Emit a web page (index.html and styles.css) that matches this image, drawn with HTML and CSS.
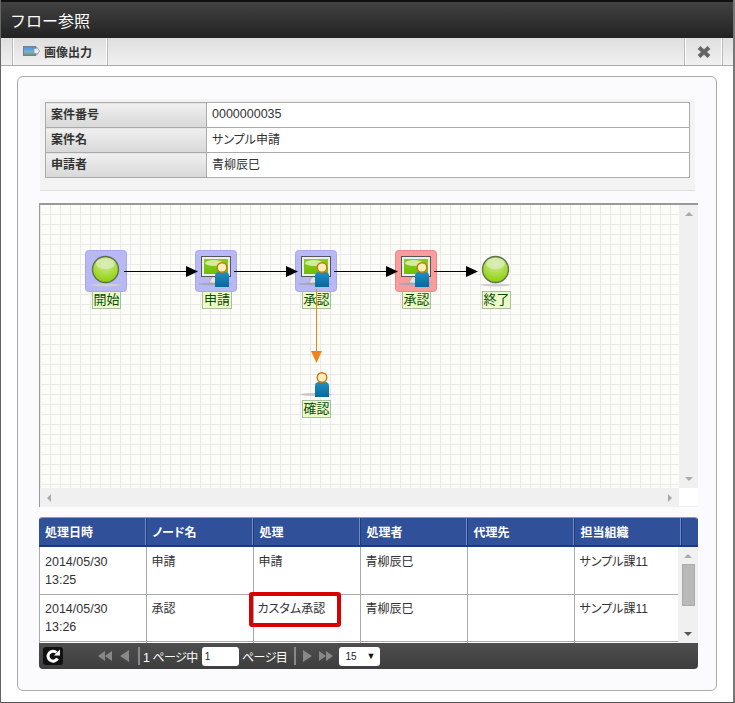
FILE: index.html
```html
<!DOCTYPE html>
<html lang="ja">
<head>
    <meta charset="UTF-8">
    <meta name="viewport" content="width=device-width, initial-scale=1.0">
    <title>フロー参照</title>
    <link rel="stylesheet" href="styles.css">
</head>
<body>
    <div class="window">
        <div class="title-bar">フロー参照</div>

        <div class="toolbar">
            <button type="button" class="tool-button">
                <svg class="export-icon" width="17" height="11" viewBox="0 0 17 11">
                    <defs>
                        <linearGradient id="exportFill" x1="0" y1="0" x2="0" y2="1">
                            <stop offset="0" stop-color="#3f8fe0"/>
                            <stop offset="0.6" stop-color="#7fb0d8"/>
                            <stop offset="1" stop-color="#5f9a50"/>
                        </linearGradient>
                    </defs>
                    <rect x="0.5" y="0.5" width="12" height="9" fill="url(#exportFill)" stroke="#77808a"/>
                    <path d="M11 2.5h2.5V0.8L16.6 5l-3.1 4.2V7.5H11z" fill="#e8eef4" stroke="#8a97a4" stroke-width="0.8"/>
                </svg>
                画像出力
            </button>
            <button type="button" class="close-button" aria-label="閉じる">
                <svg width="14" height="14" viewBox="0 0 14 14">
                    <path d="M2 2.5l10 9M12 2.5l-10 9" stroke="#666" stroke-width="4"/>
                </svg>
            </button>
        </div>

        <div class="panel">
            <div class="info-band">
                <table class="info-table">
                    <tr><th>案件番号</th><td class="num">0000000035</td></tr>
                    <tr><th>案件名</th><td>サンプル申請</td></tr>
                    <tr><th>申請者</th><td>青柳辰巳</td></tr>
                </table>
            </div>

            <div class="diagram">
                <div class="canvas">
                    <div class="node-label label-start">開始</div>
                    <div class="node-label label-apply">申請</div>
                    <div class="node-label label-approve1">承認</div>
                    <div class="node-label label-approve2">承認</div>
                    <div class="node-label label-end">終了</div>
                    <div class="node-label label-confirm">確認</div>

                    <!-- viewBox uses window coordinates -->
                    <svg class="flow" width="639" height="283" viewBox="40 205 639 283">
                        <defs>
                            <radialGradient id="ball" cx="0.5" cy="0.3" r="0.75">
                                <stop offset="0" stop-color="#cfe8a0"/>
                                <stop offset="0.55" stop-color="#a8dc40"/>
                                <stop offset="1" stop-color="#86cc00"/>
                            </radialGradient>
                            <linearGradient id="screen" x1="0" y1="0" x2="0" y2="1">
                                <stop offset="0" stop-color="#8ccc20"/>
                                <stop offset="1" stop-color="#6cc000"/>
                            </linearGradient>
                            <linearGradient id="bodyFill" x1="0" y1="0" x2="0" y2="1">
                                <stop offset="0" stop-color="#2090c0"/>
                                <stop offset="1" stop-color="#08689c"/>
                            </linearGradient>
                            <g id="person">
                                <path d="M0 20V9q0-4 4-4h6q4 0 4 4v11z" fill="url(#bodyFill)"/>
                                <circle cx="7" cy="0.5" r="4.8" fill="#fdeebc" stroke="#c87810" stroke-width="1.4"/>
                            </g>
                            <g id="task">
                                <ellipse cx="20" cy="34" rx="17" ry="1.5" fill="#a8a8b8"/>
                                <path d="M17 27h8l3 6H14z" fill="#e4e4e4" stroke="#999" stroke-width="0.6"/>
                                <rect x="6.5" y="6.5" width="29" height="20" fill="#eee" stroke="#555"/>
                                <rect x="9" y="9" width="24" height="15" fill="url(#screen)"/>
                                <ellipse cx="19" cy="13" rx="9" ry="3" fill="#d0ec9c"/>
                                <use href="#person" x="20" y="17"/>
                            </g>
                            <g id="ballIcon">
                                <ellipse cx="0" cy="15.5" rx="15" ry="1.5" fill="#cfcfcf"/>
                                <circle r="13" fill="url(#ball)" stroke="#5f6f50" stroke-width="1.3"/>
                                <ellipse cy="-6" rx="9.5" ry="5.5" fill="#e0f0c4" opacity="0.7"/>
                            </g>
                        </defs>

                        <rect class="box-blue" x="85.5" y="250.5" width="41" height="41" rx="3"/>
                        <rect class="box-blue" x="195.5" y="250.5" width="41" height="41" rx="3"/>
                        <rect class="box-blue" x="295.5" y="250.5" width="41" height="41" rx="3"/>
                        <rect class="box-red" x="395.5" y="250.5" width="41" height="41" rx="3"/>

                        <use href="#ballIcon" x="105.5" y="269.5"/>
                        <use href="#task" x="195" y="250"/>
                        <use href="#task" x="295" y="250"/>
                        <use href="#task" x="395" y="250"/>
                        <use href="#ballIcon" x="495.5" y="269.5"/>

                        <ellipse cx="316" cy="394.5" rx="16" ry="1.5" fill="#c4c4c4"/>
                        <use href="#person" x="315" y="377"/>

                        <g class="edge">
                            <path d="M124 271.5H190"/>
                            <path d="M234 271.5H290"/>
                            <path d="M334 271.5H390"/>
                            <path d="M434 271.5H470"/>
                        </g>
                        <path d="M186 266l12 5.5-12 5.5z"/>
                        <path d="M286 266l12 5.5-12 5.5z"/>
                        <path d="M386 266l12 5.5-12 5.5z"/>
                        <path d="M466 266l12 5.5-12 5.5z"/>
                        <path d="M316.5 289V353" stroke="#f08418" fill="none"/>
                        <path d="M311 351h11l-5.5 12z" fill="#f08418"/>
                    </svg>
                </div>
                <div class="scroll-v">
                    <span class="arrow-up"></span>
                    <span class="arrow-down"></span>
                </div>
                <div class="scroll-h">
                    <span class="arrow-left"></span>
                    <span class="arrow-right"></span>
                </div>
                <div class="scroll-corner"></div>
            </div>

            <div class="grid">
                <table class="grid-head">
                    <tr>
                        <th class="col">処理日時</th>
                        <th class="col">ノード名</th>
                        <th class="col">処理</th>
                        <th class="col">処理者</th>
                        <th class="col">代理先</th>
                        <th class="col">担当組織</th>
                        <th></th>
                    </tr>
                </table>
                <div class="grid-body">
                    <div class="grid-rows">
                        <table class="grid-table">
                            <tr>
                                <td class="col-first num">2014/05/30<br>13:25</td>
                                <td class="col">申請</td>
                                <td class="col">申請</td>
                                <td class="col">青柳辰巳</td>
                                <td class="col"></td>
                                <td>サンプル課11</td>
                            </tr>
                            <tr>
                                <td class="num">2014/05/30<br>13:26</td>
                                <td>承認</td>
                                <td class="custom-cell">カスタム承認<div class="highlight"></div></td>
                                <td>青柳辰巳</td>
                                <td></td>
                                <td>サンプル課11</td>
                            </tr>
                            <tr>
                                <td></td><td></td><td></td><td></td><td></td><td></td>
                            </tr>
                        </table>
                    </div>
                    <div class="grid-scroll">
                        <span class="arrow-up"></span>
                        <div class="thumb"></div>
                        <span class="arrow-down dark"></span>
                    </div>
                </div>
                <div class="pager">
                    <button type="button" class="reload" aria-label="更新">
                        <svg width="16" height="16" viewBox="0 0 16 16">
                            <path d="M12.5 10.5A5 5 0 1 1 11.5 4.5" fill="none" stroke="#fff" stroke-width="3"/>
                            <path d="M9 7.5h6V1.5z" fill="#fff"/>
                        </svg>
                    </button>
                    <svg class="pager-first" width="32" height="12" viewBox="0 0 32 12">
                        <path d="M7 1v10L0 6zM14 1v10L7 6zM31 0v12L22 6z"/>
                    </svg>
                    <span class="pager-sep"></span>
                    <span class="page-text"><span class="num">1</span> ページ中</span>
                    <input class="page-input" type="text" value="1">
                    <span class="page-text">ページ目</span>
                    <span class="pager-sep sep-right"></span>
                    <svg class="pager-last" width="30" height="12" viewBox="0 0 30 12">
                        <path d="M0 0v12l9-6zM16 1v10l7-5zM23 1v10l7-5z"/>
                    </svg>
                    <div class="page-size"><span class="num">15</span><span class="size-arrow">▼</span></div>
                </div>
            </div>
        </div>
    </div>
</body>
</html>
```

FILE: styles.css
```css
* {
    box-sizing: border-box;
}
body {
    margin: 0;
    font-family: "Liberation Sans", "Noto Sans CJK JP", sans-serif;
    font-size: 12px;
    font-feature-settings: "palt";
    color: #333;
    background: #fff;
}
.num {
    font-size: 12.5px;
}
.window {
    width: 735px;
    height: 703px;
    border-left: 1px solid #666;
    border-right: 2px solid #777;
    border-bottom: 1px solid #555;
    overflow: hidden;
}
.title-bar {
    height: 38px;
    padding: 9px 9px 0;
    border-top: 2px solid #111;
    background: linear-gradient(#424242, #222);
    color: #fff;
    font-size: 16px;
    font-feature-settings: normal;
    line-height: 22px;
}
.toolbar {
    display: flex;
    justify-content: space-between;
    height: 28px;
    padding: 0 10px 0 11px;
    border-bottom: 1px solid #aaa;
    background: linear-gradient(#dedede, #f1f1f1);
}
.tool-button,
.close-button {
    display: flex;
    align-items: center;
    padding: 0;
    border: none;
    border-left: 1px solid #bbb;
    border-right: 1px solid #bbb;
    box-shadow: inset 1px 0 #fff, inset -1px 0 #fff;
    background: transparent;
    font-family: inherit;
    color: #333;
}
.tool-button {
    width: 96px;
    padding-left: 10px;
    gap: 4px;
    font-size: 12px;
    font-weight: bold;
}
.close-button {
    width: 39px;
    justify-content: center;
}
.panel {
    width: 700px;
    height: 615px;
    margin: 10px 0 0 16px;
    padding: 22px 21px 0 22px;
    border: 1px solid #aaa;
    border-radius: 6px;
    background: #fbfbfe;
}
.info-band {
    padding: 3px 5px 12px;
    border-bottom: 1px solid #ddd;
    background: #f3f3f3;
}
.info-table {
    width: 100%;
    border-collapse: collapse;
    table-layout: fixed;
}
.info-table th,
.info-table td {
    height: 25px;
    padding: 0 5px 3px;
    border: 1px solid #aaa;
    text-align: left;
}
.info-table th {
    width: 161px;
    background: linear-gradient(#f0f0f0, #d8d8d8);
    font-weight: bold;
}
.info-table td {
    background: #fff;
}

/* flow diagram */
.diagram {
    display: grid;
    grid-template-columns: 639px 19px;
    grid-template-rows: 283px 19px;
    width: 659px;
    margin: 12px 0 0 -1px;
    border-top: 2px solid #999;
    border-left: 1px solid #999;
}
.canvas {
    position: relative;
    overflow: hidden;
    background-color: #fcfdf9;
    background-image:
        linear-gradient(#ebe8e8 1px, transparent 1px),
        linear-gradient(90deg, #ebe8e8 1px, transparent 1px);
    background-size: 10px 10px;
    background-position: 0 -1px;
}
.flow {
    position: absolute;
    top: 0;
    left: 0;
}
.box-blue {
    fill: #b8b8f4;
    stroke: #a8a8ec;
}
.box-red {
    fill: #f89c9c;
    stroke: #ee8888;
}
.edge path {
    fill: none;
    stroke: #000;
}
.node-label {
    position: absolute;
    height: 18px;
    border: 1px solid #a9bba0;
    background: #ecfdc8;
    color: #0c4a0c;
    font-size: 13px;
    line-height: 15px;
    text-align: center;
}
.label-start { left: 52px; top: 86px; width: 29px; }
.label-apply { left: 162px; top: 86px; width: 30px; }
.label-approve1 { left: 262px; top: 86px; width: 29px; }
.label-approve2 { left: 362px; top: 86px; width: 29px; }
.label-end { left: 442px; top: 86px; width: 29px; }
.label-confirm { left: 262px; top: 195px; width: 29px; }

/* scrollbars */
.scroll-v {
    display: flex;
    flex-direction: column;
    justify-content: space-between;
    align-items: center;
    padding: 7px 0;
    background: #f0f0f0;
}
.scroll-h {
    display: flex;
    justify-content: space-between;
    align-items: center;
    padding: 0 7px;
    background: #f0f0f0;
}
.scroll-corner {
    border-bottom: 1px solid #f0f0f0;
    background: #fff;
}
.arrow-up,
.arrow-down,
.arrow-left,
.arrow-right {
    width: 0;
    height: 0;
    border-style: solid;
    border-color: transparent;
}
.arrow-up {
    border-width: 0 4px 4px;
    border-bottom-color: #aaa;
}
.arrow-down {
    border-width: 4px 4px 0;
    border-top-color: #aaa;
}
.arrow-down.dark {
    border-top-color: #555;
}
.arrow-left {
    border-width: 4px 4px 4px 0;
    border-right-color: #aaa;
}
.arrow-right {
    border-width: 4px 0 4px 4px;
    border-left-color: #aaa;
}

/* history grid */
.grid {
    width: 659px;
    margin: 10px 0 0 -1px;
    border-top: 1px solid #999;
    border-radius: 3px 3px 4px 4px;
    overflow: hidden;
}
.grid table {
    border-collapse: collapse;
    table-layout: fixed;
}
.grid-head {
    width: 659px;
    height: 29px;
    background: #30519a;
    border-bottom: 2px solid #1e3a78;
}
.grid-head th {
    padding: 0 0 0 6px;
    border-right: 1px solid #1e3a78;
    box-shadow: inset -1px 0 #6f8ac8;
    color: #fff;
    font-weight: bold;
    text-align: left;
}
.grid-head th:last-child {
    border-right: none;
    box-shadow: none;
}
.col {
    width: 107px;
}
.col-first {
    width: 106px;
}
.grid-body {
    display: flex;
    height: 96px;
    border-left: 1px solid #aaa;
}
.grid-rows {
    width: 638px;
    height: 96px;
    overflow: hidden;
    background: #fff;
}
.grid-table {
    width: 639px;
}
.grid-table td {
    height: 47px;
    padding: 6px 5px 4px;
    border-right: 1px solid #aaa;
    border-bottom: 1px solid #aaa;
    line-height: 18px;
    vertical-align: top;
    white-space: nowrap;
}
.grid-table tr + tr td {
    padding-top: 5px;
    padding-bottom: 5px;
}
.grid-table .custom-cell {
    position: relative;
    padding-left: 4px;
}
.highlight {
    position: absolute;
    left: -5px;
    top: -3px;
    width: 92px;
    height: 35px;
    border: 4px solid #d80000;
    border-radius: 3px;
}
.grid-scroll {
    display: flex;
    flex: 1;
    flex-direction: column;
    align-items: center;
    padding: 7px 0;
    background: #f0f0f0;
}
.thumb {
    width: 13px;
    height: 42px;
    margin: 6px 0 auto;
    border: 1px solid #aaa;
    background: #b9b9b9;
}
.pager {
    display: flex;
    align-items: center;
    height: 26px;
    padding: 0 0 0 4px;
    background: linear-gradient(#4e4e4e, #3e3e3e);
    color: #fff;
}
.reload {
    display: flex;
    align-items: center;
    justify-content: center;
    width: 20px;
    height: 18px;
    padding: 0;
    border: none;
    border-radius: 3px;
    background: #111;
}
.pager-first {
    margin-left: 35px;
    fill: #888;
}
.pager-last {
    margin-left: 7px;
    fill: #888;
}
.pager-sep {
    width: 2px;
    height: 18px;
    margin: 0 3px 0 8px;
    background: #888;
}
.sep-right {
    margin: 0;
    margin-left: 7px;
}
.page-text {
    letter-spacing: -0.5px;
}
.page-input {
    width: 37px;
    height: 19px;
    margin: 0 3px 0 4px;
    padding: 0 3px;
    border: none;
    border-radius: 3px;
    font-family: inherit;
    font-size: 10px;
    color: #223;
}
.page-size {
    display: flex;
    align-items: center;
    justify-content: space-between;
    width: 41px;
    height: 19px;
    margin-left: 6px;
    padding: 0 5px 0 6px;
    border-radius: 3px;
    background: #fff;
    color: #223;
}
.page-size .num {
    font-size: 10px;
}
.size-arrow {
    font-size: 9px;
    color: #111;
}
```
